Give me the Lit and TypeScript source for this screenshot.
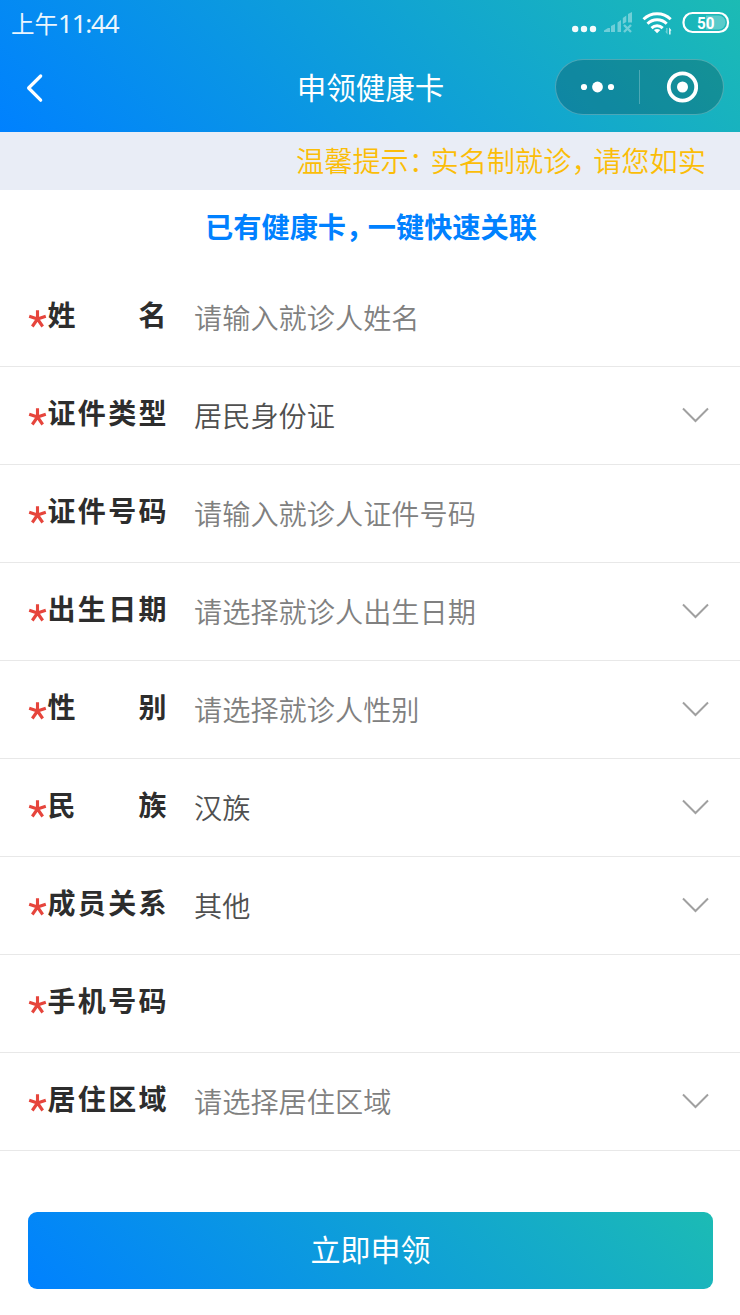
import { LitElement, html, css, nothing } from "lit";
import { customElement, property } from "lit/decorators.js";

interface Field {
  label: string;
  value?: string;
  placeholder?: string;
  picker?: boolean;
}

const FIELDS: Field[] = [
  { label: "姓名", placeholder: "请输入就诊人姓名" },
  { label: "证件类型", value: "居民身份证", picker: true },
  { label: "证件号码", placeholder: "请输入就诊人证件号码" },
  { label: "出生日期", placeholder: "请选择就诊人出生日期", picker: true },
  { label: "性别", placeholder: "请选择就诊人性别", picker: true },
  { label: "民族", value: "汉族", picker: true },
  { label: "成员关系", value: "其他", picker: true },
  { label: "手机号码" },
  { label: "居住区域", placeholder: "请选择居住区域", picker: true },
];

@customElement("status-bar")
class StatusBar extends LitElement {
  static styles = css`
    :host {
      display: flex;
      justify-content: space-between;
      height: 44px;
      color: #fff;
    }
    .time {
      padding-left: 11px;
      font-size: 23.5px;
      line-height: 47px;
      opacity: 0.92;
      white-space: nowrap;
    }
    .digits {
      font-family: "Noto Sans", sans-serif;
      font-size: 26px;
      font-weight: 400;
      letter-spacing: -1.2px;
    }
    .icons {
      display: block;
      flex: none;
    }
    .level {
      font: 700 16.5px Roboto, sans-serif;
    }
  `;

  render() {
    return html`
      <div class="time">上午<span class="digits">11:44</span></div>
      <svg class="icons" width="170" height="44" viewBox="570 0 170 44" fill="#fff">
        <g opacity="0.95">
          <circle cx="575.2" cy="29" r="3.2" />
          <circle cx="584" cy="29" r="3.2" />
          <circle cx="593" cy="29" r="3.2" />
        </g>
        <g opacity="0.38">
          <path d="M604 32v-1.500l4-2.500h2V32zM611 26l4-2v8h-4zM617.500 22.500l3.500-2.500v12h-3.500zM622.800 18l3.500-2.500V22l-3.500 2zM628 14l4-2v10.500h-4z" />
          <path d="M624 25l7 7M631 25l-7 7" fill="none" stroke="#fff" stroke-width="2.400" />
        </g>
        <g fill="none" stroke="#fff" stroke-width="2.900">
          <path d="M643.500 19.300a19.500 19.500 0 0 1 27.200 0" />
          <path d="M647.500 23.800a13.500 13.500 0 0 1 19.200 0" />
          <path d="M651.500 28.100a8 8 0 0 1 11.200 0" />
        </g>
        <path d="M657.100 33.200l-3.200-3.200q3.200-2.200 6.400 0z" />
        <path d="M669.200 34.500V27.500l2.300 3h-1v4z" />
        <path d="M667.500 28v6.500l-2.300-3h1V28z" opacity="0.4" />
        <rect x="683.500" y="13" width="44.500" height="19" rx="9" fill="none" stroke="#fff" stroke-width="2.200" />
        <path d="M706 15.500h12.500a7 7 0 0 1 0 14H706z" opacity="0.28" />
        <text class="level" x="705.800" y="28.900" text-anchor="middle" textLength="17.500" lengthAdjust="spacingAndGlyphs">50</text>
      </svg>
    `;
  }
}

@customElement("nav-bar")
class NavBar extends LitElement {
  static styles = css`
    :host {
      display: grid;
      grid-template-columns: 185px 1fr 185px;
      align-items: center;
      height: 86px;
      color: #fff;
    }
    .back {
      display: block;
      padding-left: 22px;
      padding-top: 1px;
    }
    .title {
      text-align: center;
      font-size: 29.500px;
      font-weight: 400;
      line-height: 44px;
      margin: 0;
      padding: 0 0 2px 1px;
      white-space: nowrap;
    }
    .capsule {
      box-sizing: border-box;
      display: flex;
      align-items: center;
      width: 169px;
      height: 56px;
      border-radius: 28px;
      border: 1px solid rgba(255, 255, 255, 0.25);
      background: rgba(0, 0, 0, 0.2);
    }
    .half {
      display: flex;
      flex: 1;
      justify-content: center;
    }
    .divider {
      width: 1px;
      height: 34px;
      background: rgba(255, 255, 255, 0.25);
    }
  `;

  render() {
    return html`
      <svg class="back" width="26" height="32" viewBox="22 72 26 32" fill="none" stroke="#fff" stroke-width="3.200" stroke-linecap="round" stroke-linejoin="round">
        <path d="M40.700 76L28.600 88l12.100 12.200" />
      </svg>
      <h1 class="title">申领健康卡</h1>
      <div class="capsule">
        <span class="half">
          <svg width="36" height="12" viewBox="0 0 36 12" fill="#fff">
            <circle cx="4" cy="6" r="3.100" />
            <circle cx="17.500" cy="6" r="5.400" />
            <circle cx="31" cy="6" r="3.100" />
          </svg>
        </span>
        <span class="divider"></span>
        <span class="half">
          <svg width="32" height="32" viewBox="0 0 32 32">
            <circle cx="16.500" cy="16" r="13.700" fill="none" stroke="#fff" stroke-width="3.800" />
            <circle cx="16.500" cy="16" r="5.500" fill="#fff" />
          </svg>
        </span>
      </div>
    `;
  }
}

@customElement("form-row")
class FormRow extends LitElement {
  @property({ attribute: false }) field!: Field;

  static styles = css`
    :host {
      box-sizing: border-box;
      display: flex;
      align-items: center;
      height: 98px;
      padding: 0 31px 0 28px;
      border-bottom: 1px solid #e8e8e8;
      white-space: nowrap;
    }
    .star {
      flex: none;
      display: block;
      margin: 3px 0 0 0;
    }
    .label {
      flex: none;
      width: 119px;
      margin-left: 0.5px;
      margin-right: 27.5px;
      padding-bottom: 7px;
      color: #2d2d2d;
      font-size: 28px;
      font-weight: 700;
      line-height: 40px;
      text-align: justify;
      text-align-last: justify;
    }
    .value {
      flex: 1;
      padding-bottom: 1px;
      color: #505050;
      font-size: 28.200px;
      font-weight: 350;
      line-height: 40px;
    }
    .empty {
      color: #808080;
    }
    .arrow {
      flex: none;
      display: block;
      margin-bottom: 1px;
    }
  `;

  render() {
    const { label, value, placeholder, picker } = this.field;
    return html`
      <svg class="star" width="19" height="20" viewBox="0 0 19 20" stroke="#e6453c" stroke-width="3.100">
        <path d="M9.500 10V1.300M9.500 10L1.200 7.300M9.500 10L17.800 7.300M9.500 10L4.300 17.500M9.500 10L14.700 17.500" />
      </svg>
      <span class="label">${label}</span>
      <span class="value ${value ? "" : "empty"}">${value ?? placeholder ?? ""}</span>
      ${picker
        ? html`<svg class="arrow" width="28" height="16" viewBox="0 0 28 16" fill="none" stroke="#a0a0a0" stroke-width="2">
            <path d="M2 1.500L14.500 14 27 1.500" />
          </svg>`
        : nothing}
    `;
  }
}

@customElement("app-root")
class AppRoot extends LitElement {
  static styles = css`
    :host {
      display: block;
      height: 1315px;
      overflow: hidden;
      background: #fff;
      font-family: "Noto Sans CJK SC", sans-serif;
    }
    .header {
      height: 132px;
      background: linear-gradient(45deg, #0081ff, #1cbbb4);
    }
    .notice {
      height: 58px;
      padding: 0 30px 0 296px;
      background: #e9edf6;
      color: #fbbd08;
      font-size: 28.200px;
      font-weight: 350;
      line-height: 55px;
      white-space: nowrap;
      overflow: hidden;
      box-sizing: border-box;
    }
    .mark {
      letter-spacing: -6.500px;
    }
    .link {
      height: 79px;
      padding-left: 2px;
      color: #0081ff;
      font-size: 28.200px;
      font-weight: 700;
      line-height: 72px;
      text-align: center;
      white-space: nowrap;
    }
    .submit {
      display: block;
      width: 685px;
      height: 77px;
      margin: 61px 0 0 28px;
      padding: 0 0 4px;
      border: 0;
      border-radius: 9px;
      background: linear-gradient(45deg, #0081ff, #1cbbb4);
      color: #fff;
      font: 400 30px/73px "Noto Sans CJK SC", sans-serif;
    }
  `;

  render() {
    return html`
      <div class="header">
        <status-bar></status-bar>
        <nav-bar></nav-bar>
      </div>
      <div class="notice">温馨提示<span class="mark">：</span>实名制就诊<span class="mark">，</span>请您如实</div>
      <div class="link">已有健康卡<span class="mark">，</span>一键快速关联</div>
      ${FIELDS.map((field) => html`<form-row .field=${field}></form-row>`)}
      <button class="submit">立即申领</button>
    `;
  }
}
